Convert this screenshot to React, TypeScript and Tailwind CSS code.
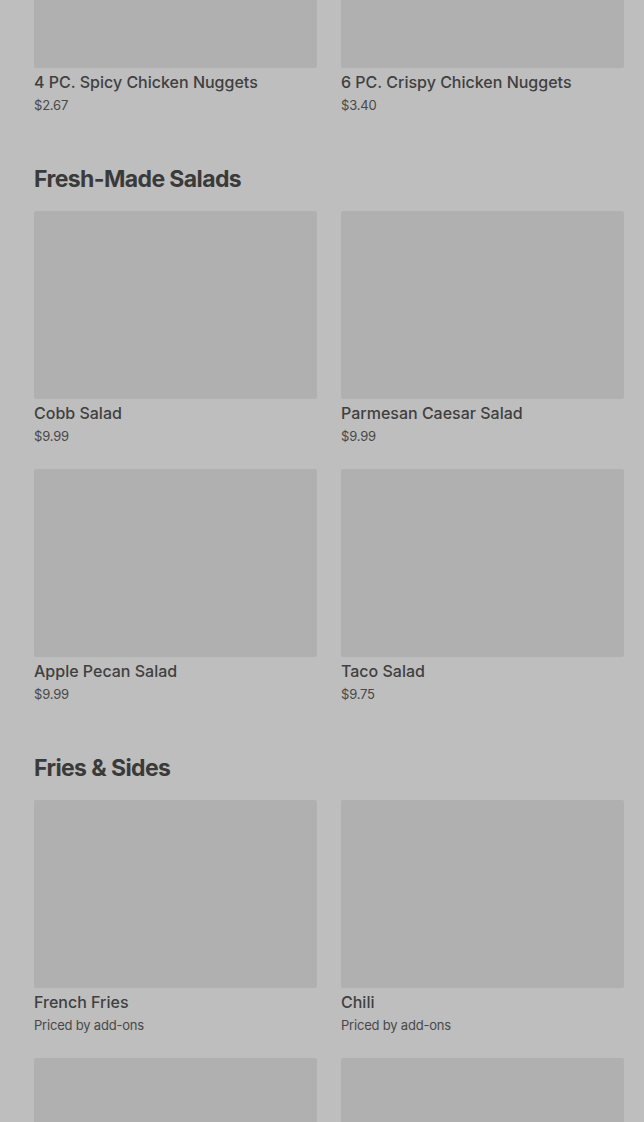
type Item = { name?: string; price?: string };

const sections: { title?: string; items: Item[] }[] = [
  {
    items: [
      { name: "4 PC. Spicy Chicken Nuggets", price: "$2.67" },
      { name: "6 PC. Crispy Chicken Nuggets", price: "$3.40" },
    ],
  },
  {
    title: "Fresh-Made Salads",
    items: [
      { name: "Cobb Salad", price: "$9.99" },
      { name: "Parmesan Caesar Salad", price: "$9.99" },
      { name: "Apple Pecan Salad", price: "$9.99" },
      { name: "Taco Salad", price: "$9.75" },
    ],
  },
  {
    title: "Fries & Sides",
    items: [
      { name: "French Fries", price: "Priced by add-ons" },
      { name: "Chili", price: "Priced by add-ons" },
      // next row is scrolled below the fold, only the photo tops show
      {},
      {},
    ],
  },
];

function Card({ item }: { item: Item }) {
  return (
    <div>
      <div className="h-[188px] rounded-[2px] bg-[#b0b0b0]" />
      {item.name && (
        <div className="mt-1 text-[16px] leading-[20px] font-medium text-[#404040]">{item.name}</div>
      )}
      {item.price && (
        <div className="mt-1 text-[13px] leading-[18px] tracking-[-0.2px] text-[#484848]">{item.price}</div>
      )}
    </div>
  );
}

export default function App() {
  return (
    <div
      className="h-[1122px] overflow-hidden bg-[#bebebe] pl-[34px] pr-[20px]"
      style={{ fontFamily: "Inter, 'Liberation Sans', sans-serif" }}
    >
      <div className="-mt-[120px] flex flex-col gap-[51px]">
        {sections.map((s, i) => (
          <section key={i}>
            {s.title && (
              <h2 className="mb-[18px] text-[23px] leading-[28px] font-bold tracking-[-0.6px] text-[#3a3a3a]">
                {s.title}
              </h2>
            )}
            <div className="grid grid-cols-2 gap-x-[24px] gap-y-[24px]">
              {s.items.map((item, j) => (
                <Card key={j} item={item} />
              ))}
            </div>
          </section>
        ))}
      </div>
    </div>
  );
}
